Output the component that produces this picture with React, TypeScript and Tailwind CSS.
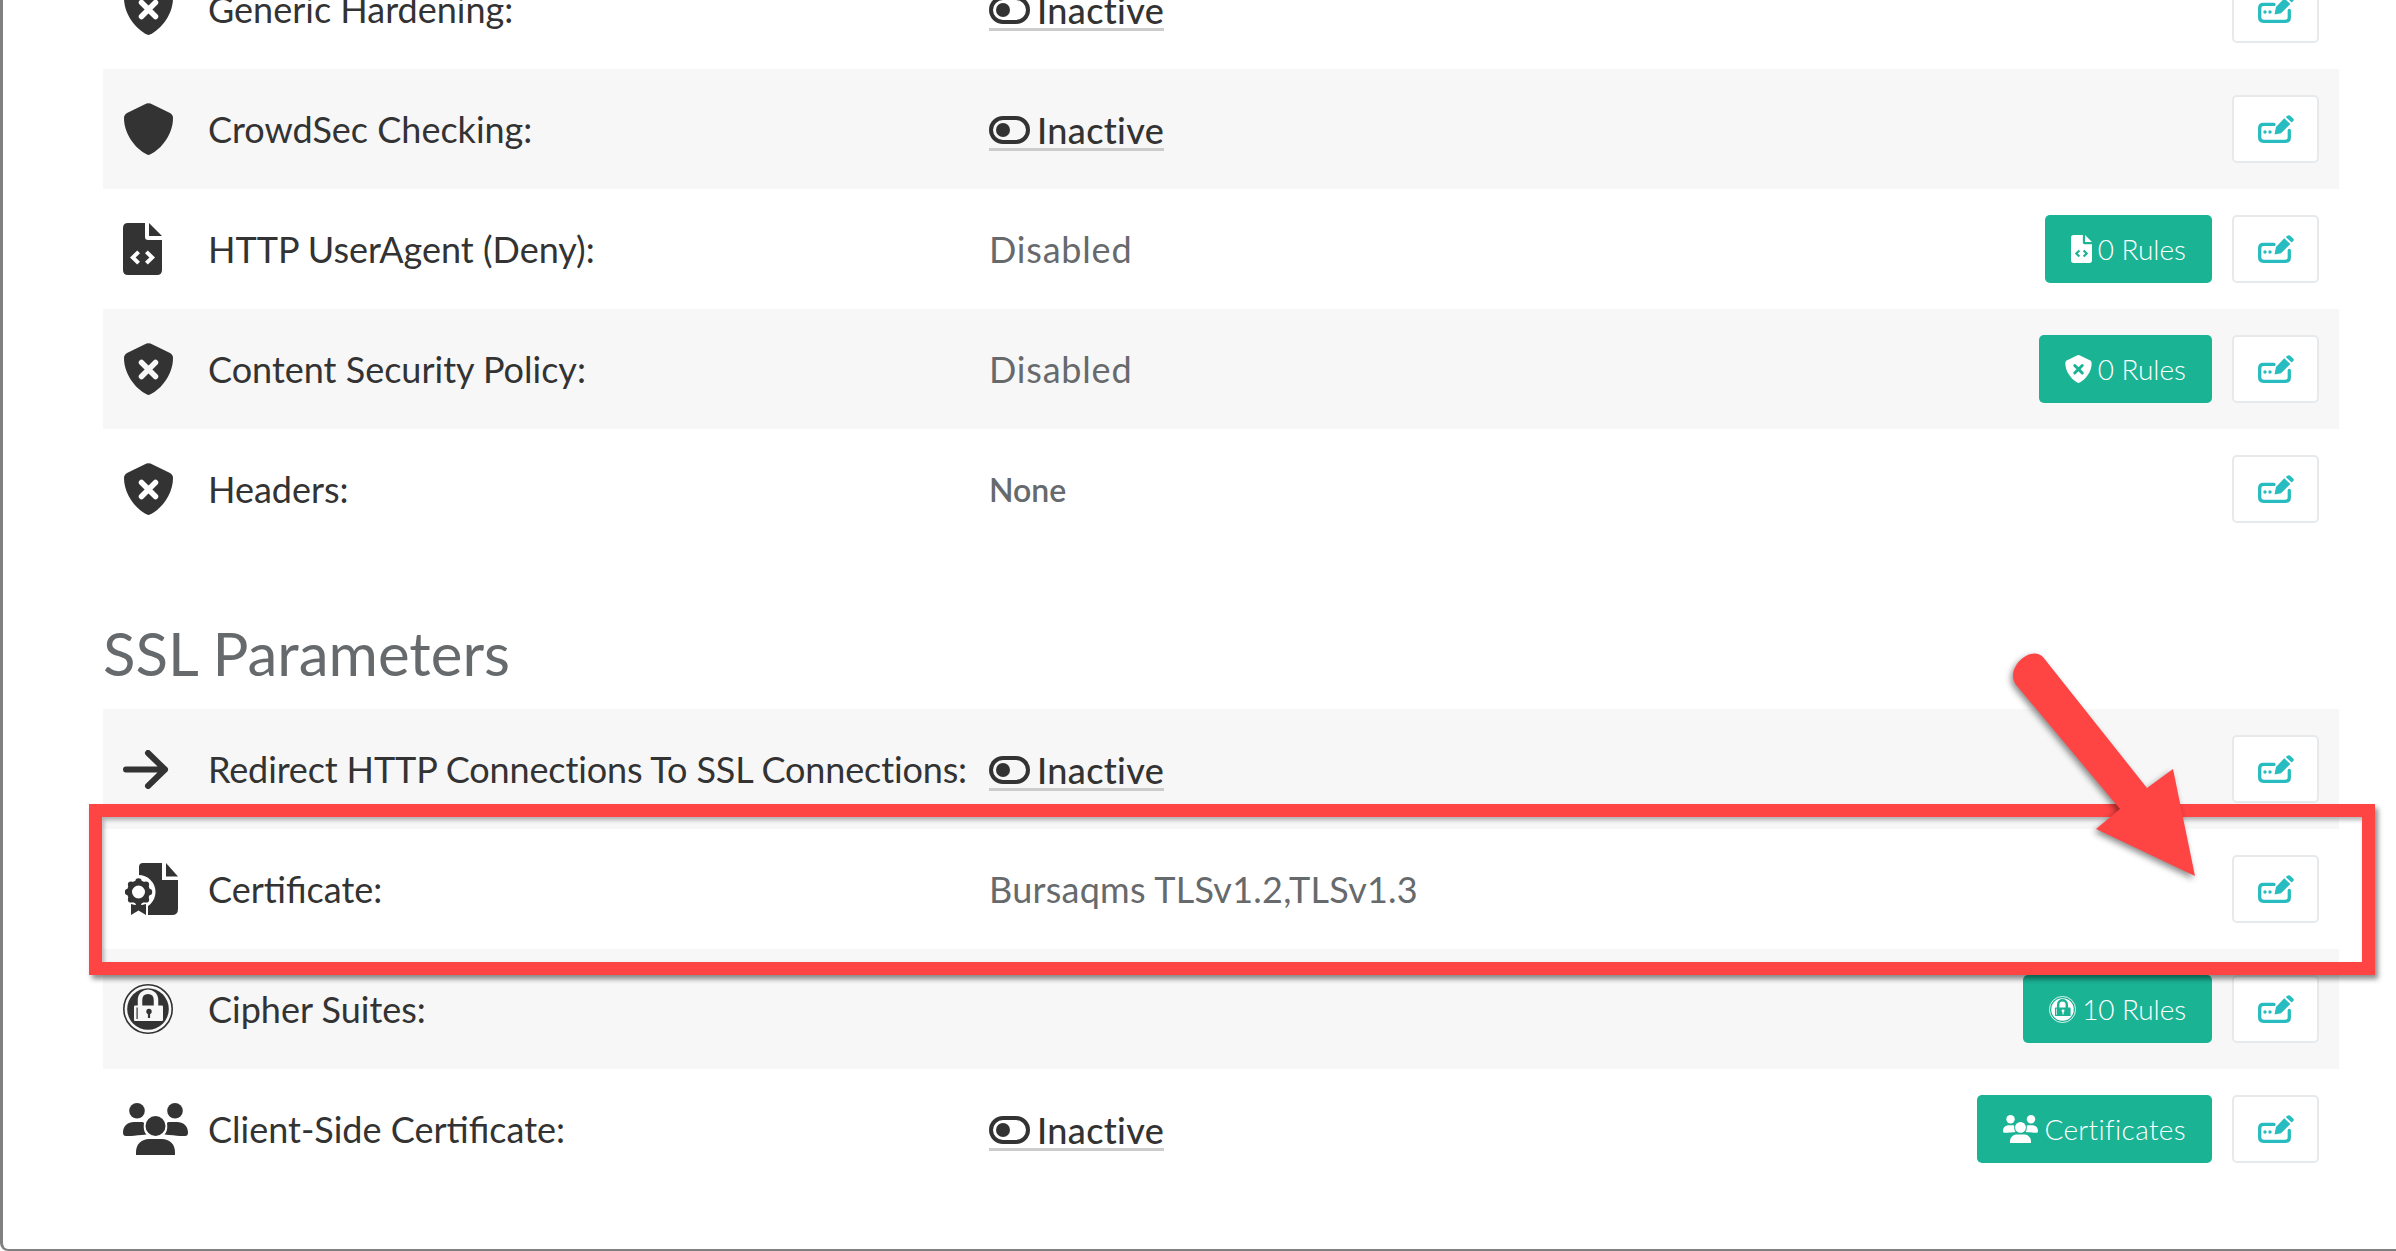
import type { ReactNode } from 'react';

function ShieldIcon({ cross, className }: { cross?: string; className?: string }) {
  return (
    <svg viewBox="0 0 49 52" className={className}>
      <path
        fill="currentColor"
        d="M22.5 .6 Q24.5 -.3 26.5 .6 L45.5 9.8 Q49 11.6 49 15 C49 31 38 45.5 26 51.6 Q24.5 52.2 23 51.6 C11 45.5 0 31 0 15 Q0 11.6 3.5 9.8Z"
      />
      {cross && (
        <path d="M17.5 19.5 L31.5 33.5 M31.5 19.5 L17.5 33.5" stroke={cross} strokeWidth="5.5" strokeLinecap="round" fill="none" />
      )}
    </svg>
  );
}

function FileCodeIcon({ className }: { className?: string }) {
  return (
    <svg viewBox="0 0 39 52" className={className}>
      <path
        fill="currentColor"
        fillRule="evenodd"
        d="M5 0 H22 V14 Q22 17 25 17 H39 V47 Q39 52 34 52 H5 Q0 52 0 47 V5 Q0 0 5 0Z M14.2 27.5 L7 34.5 L14.2 41.5 L17 38.7 L12.6 34.5 L17 30.3Z M24.8 27.5 L22 30.3 L26.4 34.5 L22 38.7 L24.8 41.5 L32 34.5Z"
      />
      <path fill="currentColor" d="M26 0 L39 13 H26Z" />
    </svg>
  );
}

function ArrowIcon({ className }: { className?: string }) {
  return (
    <svg viewBox="0 0 46 39" className={className}>
      <path d="M3 19.5 H42 M25 3 L42 19.5 L25 36" stroke="currentColor" strokeWidth="6" strokeLinecap="round" strokeLinejoin="round" fill="none" />
    </svg>
  );
}

function CertificateIcon({ className }: { className?: string }) {
  const bumps = [0, 45, 90, 135, 180, 225, 270, 315];
  return (
    <svg viewBox="0 0 53 52" className={className}>
      <path fill="currentColor" d="M18 0 H37 V17 H53 V46 Q53 52 47 52 H23 V30 H14 V4 Q14 0 18 0Z" />
      <path fill="currentColor" d="M41 0 L53 13.5 H41Z" />
      <circle cx="13.5" cy="29" r="17" fill="#fff" />
      <rect x="3" y="40" width="20" height="12" fill="#fff" />
      {bumps.map((a) => (
        <circle
          key={a}
          cx={13.5 + 10.5 * Math.cos((a * Math.PI) / 180)}
          cy={29 + 10.5 * Math.sin((a * Math.PI) / 180)}
          r="3.2"
          fill="currentColor"
        />
      ))}
      <circle cx="13.5" cy="29" r="9" fill="none" stroke="currentColor" strokeWidth="5" />
      <path fill="currentColor" d="M6 41 L10 42 H17 L21 41 V52 L13.5 47.5 L6 52Z" />
    </svg>
  );
}

function LockIcon({ inner, className }: { inner: string; className?: string }) {
  return (
    <svg viewBox="0 0 50 50" className={className}>
      <circle cx="25" cy="25" r="24.2" fill="none" stroke="currentColor" strokeWidth="1.6" />
      <circle cx="25" cy="25" r="20.8" fill="currentColor" />
      <path d="M17 22 V16 C17 5 33 5 33 16 V22" fill="none" stroke={inner} strokeWidth="4.5" />
      <rect x="11" y="21.5" width="29" height="15.5" rx="1" fill={inner} />
      <rect x="13.5" y="23.5" width="1.2" height="11.5" fill="currentColor" />
      <circle cx="26" cy="27.5" r="2.7" fill="currentColor" />
      <rect x="24.9" y="28" width="2.2" height="6" fill="currentColor" />
    </svg>
  );
}

function GroupIcon({ className }: { className?: string }) {
  return (
    <svg viewBox="0 0 65 52" className={className} fill="currentColor">
      <circle cx="14" cy="7.8" r="7.8" />
      <circle cx="52" cy="7.8" r="7.8" />
      <circle cx="32.5" cy="23" r="10" />
      <path d="M13 49 C13 41 19 36 26 36 H39 C46 36 52 41 52 49 V52 H13Z" />
      <path d="M0 29.5 C0 23 5 19 11 19 H18.5 C19.5 19 20.5 19.3 21 20 C20 27 22 30 23.5 31.5 C17 32 12 32.5 8 33 H3 Q0 33 0 29.5Z" />
      <path d="M65 29.5 C65 23 60 19 54 19 H46.5 C45.5 19 44.5 19.3 44 20 C45 27 43 30 41.5 31.5 C48 32 53 32.5 57 33 H62 Q65 33 65 29.5Z" />
    </svg>
  );
}

function EditIcon() {
  return (
    <svg viewBox="0 0 36 28" className="w-[36px] h-[28px] text-[#26bcc0]">
      <path
        d="M16 9.4 H5.5 Q1.7 9.4 1.7 13.2 V22.5 Q1.7 26.3 5.5 26.3 H27.5 Q31.3 26.3 31.3 22.5 V15.5"
        fill="none"
        stroke="currentColor"
        strokeWidth="3.3"
        strokeLinecap="round"
      />
      <circle cx="7" cy="17" r="1.7" fill="currentColor" />
      <circle cx="12" cy="17" r="1.7" fill="currentColor" />
      <path fill="currentColor" d="M16.5 19.5 L18 12 L26.3 3.3 L32.3 9 L23 18.3Z" />
      <path fill="currentColor" d="M27.8 2 L29.4 .7 Q30.9 -.4 32.2 .7 L35.2 3.4 Q36.4 4.7 35.2 6 L33.7 7.6Z" />
    </svg>
  );
}

function Toggle() {
  return (
    <svg viewBox="0 0 41 28" className="w-[41px] h-[28px] text-[#333]">
      <rect x="2" y="2" width="37" height="24" rx="12" fill="none" stroke="currentColor" strokeWidth="4" />
      <circle cx="14" cy="14" r="7" fill="currentColor" />
    </svg>
  );
}

function Inactive() {
  return (
    <span className="mt-[4px] inline-flex items-center gap-[7px] h-[40px] border-b-[3px] border-[#cccccc] text-[#333] font-medium text-[36px] tracking-[0.35px] leading-none">
      <Toggle />
      Inactive
    </span>
  );
}

function Disabled() {
  return <span className="text-[36px] tracking-[0.8px] text-[#676a6c]">Disabled</span>;
}

function RuleButton({ icon, text, tracking }: { icon: ReactNode; text: string; tracking: string }) {
  return (
    <button className={`h-[68px] px-[26px] flex items-center gap-[6px] rounded-[5px] bg-[#1ab394] text-white text-[28px] font-light whitespace-nowrap ${tracking}`}>
      {icon}
      {text}
    </button>
  );
}

type Row = { icon: ReactNode; label: string; tight?: boolean; value?: ReactNode; rule?: ReactNode };

const dark = 'text-[#333]';

const securityRows: Row[] = [
  {
    icon: <ShieldIcon cross="#ffffff" className={`w-[49px] h-[52px] ml-[1px] ${dark}`} />,
    label: 'Generic Hardening:',
    value: <Inactive />,
  },
  { icon: <ShieldIcon className={`w-[49px] h-[52px] ml-[1px] ${dark}`} />, label: 'CrowdSec Checking:', value: <Inactive /> },
  {
    icon: <FileCodeIcon className={`w-[39px] h-[52px] ${dark}`} />,
    label: 'HTTP UserAgent (Deny):',
    value: <Disabled />,
    rule: <RuleButton text="0 Rules" tracking="tracking-normal" icon={<FileCodeIcon className="w-[21px] h-[28px]" />} />,
  },
  {
    icon: <ShieldIcon cross="#f7f7f7" className={`w-[49px] h-[52px] ml-[1px] ${dark}`} />,
    label: 'Content Security Policy:',
    value: <Disabled />,
    rule: <RuleButton text="0 Rules" tracking="tracking-normal" icon={<ShieldIcon cross="#1ab394" className="w-[27px] h-[28px]" />} />,
  },
  {
    icon: <ShieldIcon cross="#ffffff" className={`w-[49px] h-[52px] ml-[1px] ${dark}`} />,
    label: 'Headers:',
    value: <span className="mt-[2px] text-[32px] font-semibold text-[#676a6c]">None</span>,
  },
];

const sslRows: Row[] = [
  {
    icon: <ArrowIcon className={`w-[46px] h-[39px] ${dark}`} />,
    label: 'Redirect HTTP Connections To SSL Connections:',
    tight: true,
    value: <Inactive />,
  },
  {
    icon: <CertificateIcon className={`w-[53px] h-[52px] ml-[2px] ${dark}`} />,
    label: 'Certificate:',
    value: <span className="text-[36px] tracking-[0.25px] text-[#676a6c]">Bursaqms TLSv1.2,TLSv1.3</span>,
  },
  {
    icon: <LockIcon inner="#f7f7f7" className={`w-[50px] h-[50px] ${dark}`} />,
    label: 'Cipher Suites:',
    rule: <RuleButton text="10 Rules" tracking="tracking-[-0.1px]" icon={<LockIcon inner="#1ab394" className="w-[27px] h-[27px]" />} />,
  },
  {
    icon: <GroupIcon className={`w-[65px] h-[52px] ${dark}`} />,
    label: 'Client-Side Certificate:',
    value: <Inactive />,
    rule: <RuleButton text="Certificates" tracking="tracking-[0.35px]" icon={<GroupIcon className="w-[35px] h-[28px]" />} />,
  },
];

function SettingRow({ row, shaded }: { row: Row; shaded: boolean }) {
  return (
    <div className={`h-[120px] flex items-center pl-[20px] pr-[20px] ${shaded ? 'bg-[#f7f7f7]' : 'bg-white'}`}>
      <div className="w-[85px] shrink-0 flex items-center">{row.icon}</div>
      <div className={`w-[781px] shrink-0 text-[36px] text-[#333] whitespace-nowrap ${row.tight ? 'tracking-[-0.14px]' : ''}`}>{row.label}</div>
      <div className="flex-1 flex items-center">{row.value}</div>
      <div className="flex items-center gap-[20px]">
        {row.rule}
        <button className="w-[87px] h-[68px] flex items-center justify-center rounded-[5px] bg-white border-2 border-[#e7eaec]">
          <EditIcon />
        </button>
      </div>
    </div>
  );
}

export default function App() {
  return (
    <div
      className="relative h-[1251px] overflow-hidden bg-white border-l-[3px] border-b-[2px] border-[#808080] rounded-bl-[8px] pl-[100px] pr-[57px]"
      style={{ fontFamily: 'Lato, "Open Sans", sans-serif' }}
    >
      <div className="mt-[-51px]">
        {securityRows.map((row, i) => (
          <SettingRow key={row.label} row={row} shaded={i % 2 === 1} />
        ))}
      </div>
      <h2 className="h-[160px] flex items-center pt-[48px] text-[60px] leading-none text-[#676a6c] font-normal">SSL Parameters</h2>
      <div>
        {sslRows.map((row, i) => (
          <SettingRow key={row.label} row={row} shaded={i % 2 === 0} />
        ))}
      </div>

      {/* red annotation drawn over the page */}
      <div className="absolute left-[86px] top-[804px] w-[2286px] h-[171px] border-[13px] border-[#ff4444] shadow-[3px_4px_5px_rgba(0,0,0,0.45),inset_2px_3px_4px_rgba(0,0,0,0.3)] pointer-events-none" />
      <svg className="absolute left-0 top-0 w-[2396px] h-[1251px] pointer-events-none drop-shadow-[-2px_3px_3px_rgba(0,0,0,0.45)]" viewBox="3 0 2396 1251">
        <path
          fill="#ff4444"
          d="M2043 657 L2147 788 L2173 769 L2195 876 L2096 829 L2120 809 L2017 686 C2003 670 2030 644 2043 657Z"
        />
      </svg>
    </div>
  );
}
